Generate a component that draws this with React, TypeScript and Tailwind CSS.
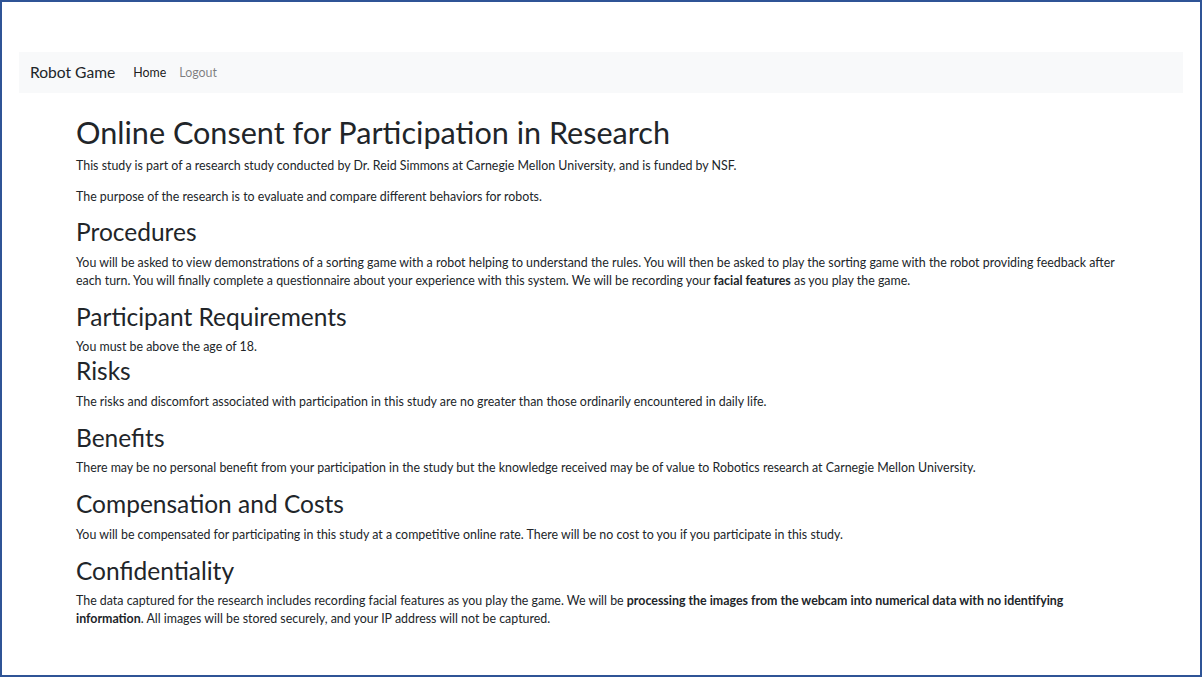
const font = { fontFamily: 'Lato, "Open Sans", sans-serif' };

const Section = ({ title, children, tight }: { title: string; children: React.ReactNode; tight?: boolean }) => (
  <section>
    <h3 className="text-[24.5px] leading-[29px] mb-[7.5px] font-normal">{title}</h3>
    <p className={tight ? "mb-0" : "mb-[12px]"}>{children}</p>
  </section>
);

export default function App() {
  return (
    <div
      className="w-[1202px] h-[677px] box-border border-2 border-[#2f5496] bg-white overflow-hidden text-[#212529]"
      style={font}
    >
      <div className="pt-[50px] px-[17px]">
        <nav className="h-[41px] bg-[#f8f9fa] flex items-center pl-[11px]">
          <span className="text-[15.6px] mr-[18px]">Robot Game</span>
          <a className="text-[12.4px] text-black/90 mr-[13px] pt-px">Home</a>
          <a className="text-[12.4px] text-black/50 pt-px">Logout</a>
        </nav>
        <main className="w-[1052px] ml-[57px] text-[12.4px] leading-[18px] pt-[21px]">
          <h1 className="text-[30.6px] leading-[37px] mb-[6px] font-normal">
            Online Consent for Participation in Research
          </h1>
          <p className="mb-[13px]">
            This study is part of a research study conducted by Dr. Reid Simmons at Carnegie Mellon University, and is
            funded by NSF.
          </p>
          <p className="mb-[11px]">The purpose of the research is to evaluate and compare different behaviors for robots.</p>
          <Section title="Procedures">
            You will be asked to view demonstrations of a sorting game with a robot helping to understand the rules. You
            will then be asked to play the sorting game with the robot providing feedback after each turn. You will finally
            complete a questionnaire about your experience with this system. We will be recording your{" "}
            <b>facial features</b> as you play the game.
          </Section>
          <Section title="Participant Requirements" tight>
            You must be above the age of 18.
          </Section>
          <Section title="Risks">
            The risks and discomfort associated with participation in this study are no greater than those ordinarily
            encountered in daily life.
          </Section>
          <Section title="Benefits">
            There may be no personal benefit from your participation in the study but the knowledge received may be of value
            to Robotics research at Carnegie Mellon University.
          </Section>
          <Section title="Compensation and Costs">
            You will be compensated for participating in this study at a competitive online rate. There will be no cost to
            you if you participate in this study.
          </Section>
          <Section title="Confidentiality">
            The data captured for the research includes recording facial features as you play the game. We will be{" "}
            <b>processing the images from the webcam into numerical data with no identifying information</b>. All images
            will be stored securely, and your IP address will not be captured.
          </Section>
        </main>
      </div>
    </div>
  );
}
